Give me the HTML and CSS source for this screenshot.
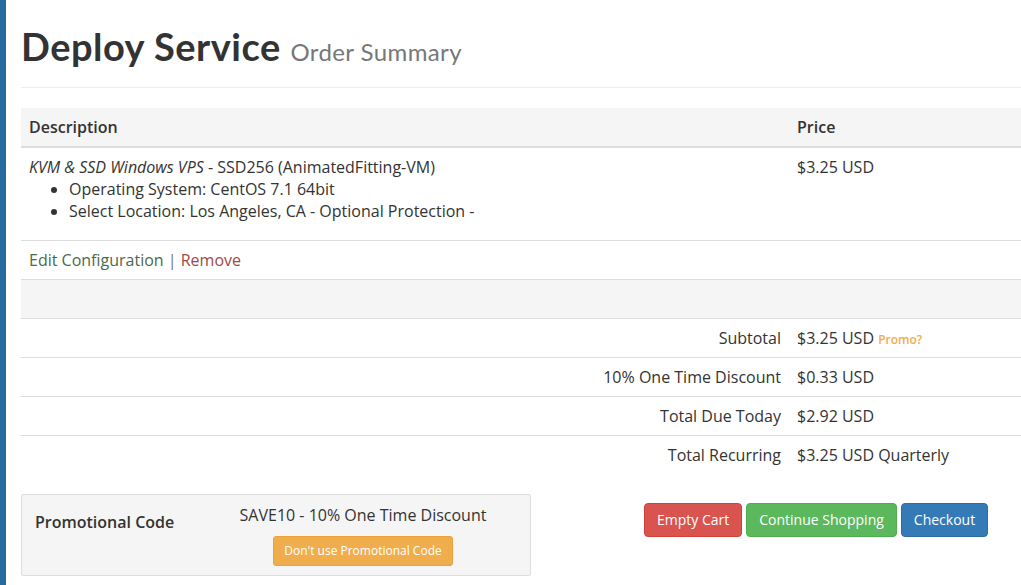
FILE: index.html
```html
<!DOCTYPE html>
<html>
<head>
<meta charset="utf-8">
<link rel="stylesheet" href="styles.css">
</head>
<body>
<div class="layout">
  <div class="sidebar"></div>
  <main class="main">
    <header class="page-header">
      <h1>Deploy Service <small>Order Summary</small></h1>
    </header>
    <table class="cart">
      <thead>
        <tr><th class="col-desc">Description</th><th class="col-price">Price</th></tr>
      </thead>
      <tbody>
        <tr>
          <td>
            <em>KVM &amp; SSD Windows VPS</em> - SSD256 (AnimatedFitting-VM)
            <ul class="opts">
              <li>Operating System: CentOS 7.1 64bit</li>
              <li>Select Location: Los Angeles, CA - Optional Protection -</li>
            </ul>
          </td>
          <td>$3.25 USD</td>
        </tr>
        <tr>
          <td colspan="2"><a class="edit" href="#">Edit Configuration</a> <span class="sep">|</span> <a class="remove" href="#">Remove</a></td>
        </tr>
        <tr class="blank"><td colspan="2">&nbsp;</td></tr>
        <tr class="sum"><td class="label">Subtotal</td><td>$3.25 USD <a class="promo" href="#">Promo?</a></td></tr>
        <tr class="sum"><td class="label">10% One Time Discount</td><td>$0.33 USD</td></tr>
        <tr class="sum"><td class="label">Total Due Today</td><td>$2.92 USD</td></tr>
        <tr class="sum"><td class="label">Total Recurring</td><td>$3.25 USD Quarterly</td></tr>
      </tbody>
    </table>
    <div class="bottom">
      <div class="promo-box">
        <div class="promo-label">Promotional Code</div>
        <div class="promo-info">
          <div>SAVE10 - 10% One Time Discount</div>
          <button class="btn btn-warning btn-sm">Don't use Promotional Code</button>
        </div>
      </div>
      <div class="actions">
        <button class="btn btn-danger">Empty Cart</button>
        <button class="btn btn-success">Continue Shopping</button>
        <button class="btn btn-primary">Checkout</button>
      </div>
    </div>
  </main>
</div>
</body>
</html>
```

FILE: styles.css
```css
html, body {
  margin: 0;
  padding: 0;
  background: #fff;
  overflow: hidden;
}
body {
  font-family: "Open Sans", "Liberation Sans", sans-serif;
  font-size: 16px;
  line-height: 22px;
  color: #333;
}
.layout {
  display: flex;
  min-height: 585px;
  width: 1060px;
}
.sidebar {
  width: 6px;
  flex: 0 0 6px;
  background: #286ba0;
}
.main {
  flex: 1;
  padding-left: 15px;
}
.page-header {
  margin-top: 20px;
  padding-bottom: 9px;
  border-bottom: 1px solid #eee;
  margin-bottom: 20px;
}
.page-header h1 {
  margin: 0;
  font-family: "Lato", "Open Sans", sans-serif;
  font-size: 38px;
  line-height: 52px;
  font-weight: 700;
  letter-spacing: 0.5px;
  color: #333;
}
.page-header small {
  font-size: 24px;
  font-weight: 400;
  letter-spacing: 0.4px;
  color: #777;
}
.cart {
  width: 100%;
  border-collapse: collapse;
}
.cart th {
  text-align: left;
  font-weight: 600;
  background: #f5f5f5;
  padding: 8px;
  line-height: 22px;
  border-bottom: 2px solid #ddd;
}
.cart .col-desc { width: 752px; }
.cart td {
  padding: 8px;
  vertical-align: top;
  border-top: 1px solid #ddd;
  line-height: 22px;
}
.cart tbody tr:first-child td { border-top: 0; }
.opts {
  margin: 0 0 10px;
  padding-left: 40px;
}
.edit { color: #4b6a4b; text-decoration: none; }
.remove { color: #9c4a48; text-decoration: none; }
.sep { color: #777; }
.blank td { background: #f5f5f5; }
.sum .label { text-align: right; }
.promo {
  color: #f0ad4e;
  font-size: 12px;
  line-height: 1;
  font-weight: 600;
  text-decoration: none;
}
.bottom {
  display: flex;
  align-items: flex-start;
  margin-top: 20px;
}
.promo-box {
  width: 481px;
  display: flex;
  background: #f5f5f5;
  border: 1px solid #ddd;
  border-radius: 2px;
  padding: 9px 14px 9px 13px;
}
.promo-label {
  width: 175px;
  font-weight: 600;
  padding-top: 7px;
}
.promo-info {
  flex: 1;
  text-align: center;
}
.btn {
  font-family: "Open Sans", "Liberation Sans", sans-serif;
  font-size: 14px;
  line-height: 20px;
  padding: 6px 12px;
  border: 1px solid transparent;
  border-radius: 4px;
  color: #fff;
  cursor: pointer;
}
.btn-sm {
  font-size: 12px;
  line-height: 18px;
  padding: 5px 10px;
  border-radius: 3px;
  margin-top: 10px;
}
.btn-warning { background: #f0ad4e; border-color: #eea236; }
.btn-danger { background: #d9534f; border-color: #d43f3a; }
.btn-success { background: #5cb85c; border-color: #4cae4c; }
.btn-primary { background: #337ab7; border-color: #2e6da4; }
.actions {
  display: flex;
  gap: 4px;
  margin-left: 113px;
  margin-top: 9px;
}
```
